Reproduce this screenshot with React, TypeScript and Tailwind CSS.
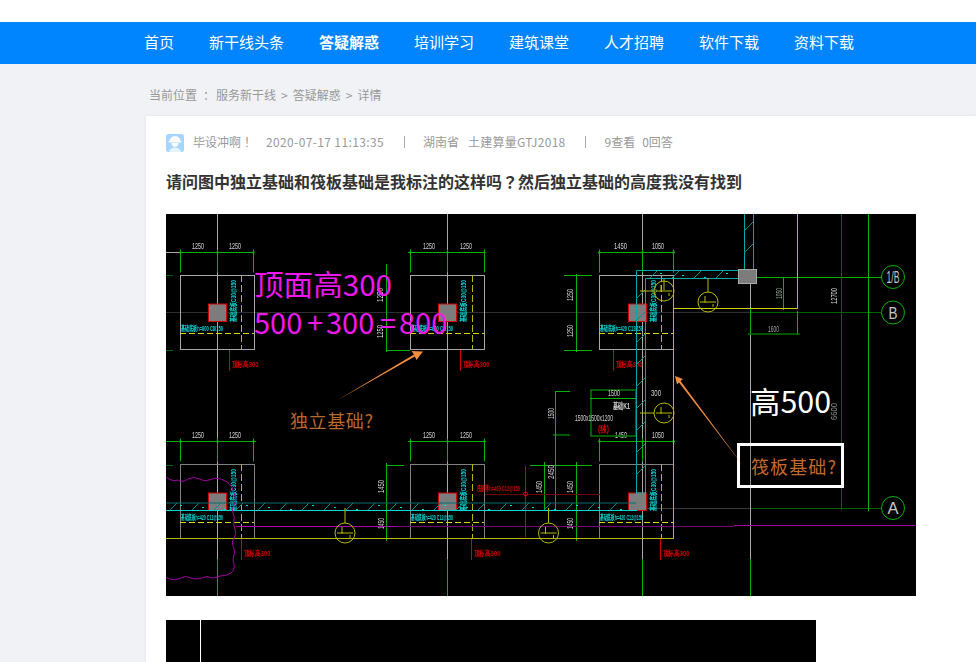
const GRAY = "#a8a8a8";
const GREEN = "#00b400";
const DGREEN = "#006400";
const CYAN = "#00d8d8";
const YEL = "#b8b800";
const RED = "#d00000";
const PUR = "#a000a0";
const CAD = "'Liberation Sans',sans-serif";
const CJK = "'Microsoft YaHei','Noto Sans CJK SC',sans-serif";

function T({ x, y, c = "#d4d4d4", s = 9, w, r, b, children }: { x: number; y: number; c?: string; s?: number; w?: number; r?: boolean; b?: boolean; children: string }) {
  return (
    <text
      x={x}
      y={y}
      fill={c}
      fontSize={s}
      fontWeight={b ? 700 : 400}
      fontFamily={CAD}
      textLength={w}
      lengthAdjust="spacingAndGlyphs"
      transform={r ? `rotate(-90 ${x} ${y})` : undefined}
      className="blur-[0.3px]"
    >
      {children}
    </text>
  );
}

function Dim({ y, x1, x2, ticks, h = 20 }: { y: number; x1: number; x2: number; ticks: number[]; h?: number }) {
  return (
    <g>
      <line x1={x1} x2={x2} y1={y} y2={y} stroke={GREEN} />
      {ticks.map((t) => (
        <g key={t}>
          <line x1={t} x2={t} y1={y - 3} y2={y + h} stroke={GREEN} />
          <rect x={t - 1} y={y - 1} width={2} height={2} fill={GREEN} />
        </g>
      ))}
    </g>
  );
}

function Footing({ x, w, y, cx, dash, lab, redLab, redX, cyanX, dashY, edge = GRAY }: { x: number; w: number; y: number; cx: number; dash: number; lab: string; redLab: string; redX: number; cyanX: number; dashY: number; edge?: string }) {
  return (
    <g>
      <rect x={x + 0.5} y={y + 0.5} width={w} height={74} fill="none" stroke={edge} />
      <line x1={x} x2={x + w} y1={dashY} y2={dashY} stroke="#d8d800" strokeDasharray="6 3" />
      <line x1={dash} x2={dash} y1={y} y2={y + 74} stroke={YEL} strokeDasharray="7 3" />
      <rect x={cx + 0.5} y={y + 29} width={18} height={17.5} fill="#7c7c7c" stroke={RED} />
      <T x={x + 1} y={dashY - 3} c={CYAN} s={8} w={cx - x + 14} b>{lab}</T>
      <T x={cyanX} y={y + 47} c={CYAN} s={8} w={42} r b>基础底板C30@150</T>
      <line x1={redX} x2={redX} y1={y + 75} y2={y + 96} stroke={RED} />
      <T x={redX + 2} y={y + 92} c={RED} s={8} w={27} b>{redLab}</T>
    </g>
  );
}

function Circ({ x, y, c = YEL, r = 10, t, tw }: { x: number; y: number; c?: string; r?: number; t?: string; tw?: number }) {
  return (
    <g>
      <circle cx={x} cy={y} r={r} fill="none" stroke={c} />
      {t ? (
        <text x={x} y={y + 6} textAnchor="middle" fill="#c8c8c8" fontSize={16} fontFamily={CAD} textLength={tw} lengthAdjust="spacingAndGlyphs">
          {t}
        </text>
      ) : (
        <g stroke={c}>
          <line x1={x - 8} x2={x + 8} y1={y} y2={y} />
          <line x1={x - 3} x2={x - 3} y1={y - 6} y2={y + 1} />
          <line x1={x + 5} x2={x + 5} y1={y + 2} y2={y + 5} />
        </g>
      )}
    </g>
  );
}

function Hatch({ x1, x2, y, h, step = 22 }: { x1: number; x2: number; y: number; h: number; step?: number }) {
  const n = Math.floor((x2 - x1) / step);
  return (
    <g stroke="#008c8c">
      {Array.from({ length: n }).map((_, i) => (
        <line key={i} x1={x1 + i * step} y1={y + h} x2={x1 + i * step + h} y2={y} />
      ))}
      {Array.from({ length: n }).map((_, i) => (
        <rect key={"d" + i} x={x1 + i * step + 10} y={y + 2 + (i % 3) * 2} width={2} height={1} fill={CYAN} stroke="none" />
      ))}
    </g>
  );
}

function VHatch({ x, y1, y2, w }: { x: number; y1: number; y2: number; w: number }) {
  const n = Math.floor((y2 - y1) / 22);
  return (
    <g stroke="#008c8c">
      {Array.from({ length: n }).map((_, i) => (
        <line key={i} x1={x} y1={y1 + i * 22 + w} x2={x + w} y2={y1 + i * 22} />
      ))}
    </g>
  );
}

function Drawing() {
  return (
    <svg viewBox="166 214 750 382" className="block w-[750px] h-[382px] bg-black">
      {/* long axes */}
      <g stroke="#303030">
        <line x1="166" x2="636" y1="312.5" y2="312.5" />
        <line x1="640" x2="750" y1="508.5" y2="508.5" stroke="#3a3a3a" />
        <line x1="640" x2="750" y1="312.5" y2="312.5" />
      </g>
      <line x1="757" x2="881" y1="277.5" y2="277.5" stroke={GREEN} />
      <line x1="750" x2="881" y1="312.5" y2="312.5" stroke={DGREEN} />
      <line x1="750" x2="881" y1="508.5" y2="508.5" stroke={DGREEN} />
      <line x1="841.5" x2="841.5" y1="214" y2="510" stroke={DGREEN} />
      <line x1="868.5" x2="868.5" y1="214" y2="511" stroke={GREEN} />
      {[217.5, 447.5, 642.5, 750.5].map((x) => (
        <g key={x}>
          <line x1={x} x2={x} y1={x === 750.5 ? 284 : 214} y2="559" stroke={GRAY} />
          <line x1={x} x2={x} y1="559" y2="596" stroke={GREEN} />
        </g>
      ))}
      {/* top dims */}
      <line x1="166" x2="180" y1="252.5" y2="252.5" stroke={GRAY} />
      <Dim y={252.5} x1={180} x2={254} ticks={[180.5, 217.5, 253.5]} />
      <Dim y={252.5} x1={408} x2={485} ticks={[410.5, 447.5, 484.5]} />
      <Dim y={252.5} x1={598} x2={675} ticks={[599.5, 642.5, 673.5]} />
      <T x={192} y={249} w={12}>1250</T>
      <T x={229} y={249} w={12}>1250</T>
      <T x={423} y={249} w={12}>1250</T>
      <T x={460} y={249} w={12}>1250</T>
      <T x={614} y={249} w={13}>1450</T>
      <T x={652} y={249} w={12}>1050</T>
      {/* lower dims */}
      <line x1="166" x2="180" y1="441.5" y2="441.5" stroke={GREEN} />
      <Dim y={441.5} x1={178} x2={256} ticks={[180.5, 217.5, 253.5]} />
      <Dim y={441.5} x1={408} x2={485} ticks={[410.5, 447.5, 484.5]} />
      <Dim y={441.5} x1={598} x2={675} ticks={[599.5, 642.5, 673.5]} />
      <T x={192} y={438} w={12}>1250</T>
      <T x={229} y={438} w={12}>1250</T>
      <T x={423} y={438} w={12}>1250</T>
      <T x={460} y={438} w={12}>1250</T>
      <T x={615} y={438} w={12}>1450</T>
      <T x={652} y={438} w={12}>1050</T>
      {/* vertical dims */}
      <g stroke={GREEN}>
        <line x1="386.5" x2="386.5" y1="264" y2="352" />
        <line x1="386" x2="410" y1="350.5" y2="350.5" />
        <line x1="386.5" x2="386.5" y1="463" y2="541" />
        <line x1="386" x2="404" y1="465.5" y2="465.5" />
        <line x1="576.5" x2="576.5" y1="274" y2="352" />
        <line x1="564" x2="592" y1="275.5" y2="275.5" />
        <line x1="564" x2="592" y1="350.5" y2="350.5" />
        <line x1="576.5" x2="576.5" y1="462" y2="541" />
        <line x1="530" x2="592" y1="465.5" y2="465.5" />
        <line x1="544.5" x2="544.5" y1="462" y2="510" />
        <line x1="555.5" x2="555.5" y1="392" y2="510" />
        <line x1="555" x2="570" y1="391.5" y2="391.5" />
        <line x1="553" x2="570" y1="435" y2="435" />
      </g>
      <rect x="591" y="390" width="45" height="46" fill="none" stroke="#007800" strokeWidth="1.5" />
      <line x1="590" x2="636" y1="398.5" y2="398.5" stroke={GREEN} />
      <T x={383} y={302} w={14} r>1250</T>
      <T x={383} y={338} w={13} r>1250</T>
      <T x={384} y={493} w={13} r>1450</T>
      <T x={384} y={529} w={11} r>1450</T>
      <T x={573} y={301} w={12} r>1250</T>
      <T x={573} y={337} w={12} r>1250</T>
      <T x={573} y={493} w={12} r>1450</T>
      <T x={573} y={529} w={11} r>1450</T>
      <T x={542} y={493} w={12} r>1450</T>
      <T x={554} y={479} w={14} r>2450</T>
      <T x={554} y={419} w={11} r>1500</T>
      <T x={608} y={396} w={12}>1500</T>
      <T x={651} y={396} w={10}>300</T>
      <T x={613} y={409} w={17} b>基础K1</T>
      <T x={575} y={421} w={38}>1500x1500x1200</T>
      <T x={598} y={432} c={RED} w={11} b>(独)</T>
      <T x={768} y={332} c="#a0a0a0" w={11}>1600</T>
      <T x={782} y={299} c="#a0a0a0" w={11} r>1050</T>
      <T x={837} y={304} w={16} r>12700</T>
      <T x={837} y={420} c="#8c8c8c" w={17} r>6600</T>
      <g stroke={GREEN}>
        <line x1="783.5" x2="783.5" y1="277" y2="310" />
        <line x1="750.5" x2="750.5" y1="309" y2="335" />
        <line x1="797.5" x2="797.5" y1="311" y2="335" />
      </g>
      <line x1="748" x2="800" y1="334" y2="334" stroke="#007000" strokeWidth="1.5" />
      <line x1="166" x2="173" y1="275.5" y2="275.5" stroke={DGREEN} />
      <line x1="166" x2="173" y1="350.5" y2="350.5" stroke={DGREEN} />
      <line x1="166" x2="173" y1="465.5" y2="465.5" stroke={DGREEN} />

      {/* footings */}
      <Footing x={180} w={74} y={275} cx={208} dash={241.5} dashY={333.5} cyanX={236} lab="基础底板h=600 C8/150" redLab="顶标高300" redX={229.5} />
      <Footing x={410} w={74} y={275} cx={438} dash={472.5} dashY={333.5} cyanX={466} lab="基础底板h=600 C8/150" redLab="顶标高300" redX={460.5} />
      <Footing x={599} w={74} y={275} cx={628} dash={661.5} dashY={333.5} cyanX={656} lab="基础底板h=420 C12/150" redLab="顶标高300" redX={613.5} />
      <Footing x={180} w={74} y={464} cx={208} dash={241.5} dashY={522.5} cyanX={236} edge="#808080" lab="基础底板h=420 C12@150" redLab="顶标高300" redX={241.5} />
      <Footing x={410} w={74} y={464} cx={438} dash={472.5} dashY={522.5} cyanX={466} edge="#808080" lab="基础底板h=420 C12@150" redLab="顶标高300" redX={471.5} />
      <Footing x={599} w={74} y={464} cx={628} dash={661.5} dashY={522.5} cyanX={656} edge="#808080" lab="基础底板h=420 C12@150" redLab="顶标高300" redX={660.5} />

      {/* red section mark */}
      <line x1="525.5" x2="525.5" y1="466" y2="537" stroke={RED} />
      <line x1="485" x2="600" y1="494.5" y2="494.5" stroke="#700000" />
      <circle cx="525.5" cy="494" r="2" fill="none" stroke={RED} />
      <T x={477} y={491} c={RED} s={8} w={43} b>筏板厚h=400 C12@150</T>

      {/* strip band */}
      <Hatch x1={170} x2={636} y={503} h={7} />
      <line x1="166" x2="636" y1="503" y2="503" stroke="#006e6e" />
      <line x1="166" x2="637" y1="510.5" y2="510.5" stroke={CYAN} />
      <line x1="397" x2="734" y1="526.5" y2="526.5" stroke="#7a007a" />
      <line x1="236" x2="397" y1="526.5" y2="526.5" stroke="#b000b0" />
      <line x1="734" x2="916" y1="525.5" y2="525.5" stroke="#a000a0" />
      <line x1="166" x2="673" y1="538.5" y2="538.5" stroke={YEL} />
      <line x1="673.5" x2="673.5" y1="278" y2="539" stroke={YEL} />
      <line x1="673" x2="798" y1="308.5" y2="308.5" stroke="#d0d000" />
      <line x1="797.5" x2="797.5" y1="214" y2="309" stroke={YEL} />

      {/* cyan walls */}
      <g fill="none" stroke="#00a8a8">
        <path d="M636.5 493V270.5H738M645.5 493V278.5H738" />
        <path d="M744.5 214V270M753.5 214V270" />
        <line x1="636" x2="646" y1="493" y2="493" stroke={CYAN} />
      </g>
      <Hatch x1={650} x2={738} y={271} h={7} />
      <VHatch x={636} y1={290} y2={500} w={9} />
      <VHatch x={744} y1={222} y2={270} w={9} />
      <rect x="738.5" y="269.5" width="18" height="14" fill="#7c7c7c" stroke="#a8a8a8" />

      {/* revision cloud */}
      <path
        d="M166 477q6 5 12 3q5 3 10-1q6-3 12 0q4 3 9 1q6-3 12-1q7 2 11 8q2 6 3 9q2 5-1 9q-3 4-1 8q2 4 1 8q-1 4 1 8q2 5-1 9q-3 4-1 8q3 5 1 9q-2 5 0 9q1 6-3 9q-5 3-11 3q-4 2-8 2q-5-3-10 0q-6 2-11 0q-6-3-10 0q-6 3-11 1q-5-3-10-1q-4 2-4 1"
        fill="none"
        stroke={PUR}
      />

      {/* section circles */}
      <line x1="664" x2="664" y1="279" y2="290" stroke={YEL} />
      <line x1="708" x2="708" y1="278" y2="292" stroke={YEL} />
      <line x1="345" x2="345" y1="508" y2="523" stroke={YEL} />
      <line x1="548.5" x2="548.5" y1="508" y2="523" stroke={YEL} />
      <line x1="640" x2="654" y1="291" y2="291" stroke={YEL} />
      <line x1="640" x2="654" y1="413" y2="413" stroke={YEL} />
      <Circ x={664} y={291} />
      <Circ x={708} y={302} />
      <Circ x={664} y={413} />
      <Circ x={345} y={533} />
      <Circ x={548.5} y={533} />
      <Circ x={893} y={277} c={GREEN} r={11.5} t="1/B" tw={13} />
      <Circ x={893} y={312.5} c={GREEN} r={11.5} t="B" tw={9} />
      <Circ x={893} y={508} c={GREEN} r={11.5} t="A" tw={11} />

      {/* annotations */}
      <text x="254" y="296" fill="#ee18ee" fontSize="29" fontFamily={CJK} textLength="138" lengthAdjust="spacingAndGlyphs">顶面高300</text>
      <text y="334" fill="#ee18ee" fontSize="29" fontFamily={CJK}>
        <tspan x="254">500</tspan>
        <tspan x="307">+</tspan>
        <tspan x="326">300</tspan>
        <tspan x="380">=</tspan>
        <tspan x="399">800</tspan>
      </text>
      <text x="750" y="413" fill="#fff" fontSize="30" fontFamily={CJK} textLength="81" lengthAdjust="spacingAndGlyphs">高500</text>
      <text x="290" y="428" fill="#b9682c" fontSize="18" fontFamily={CJK} textLength="83" lengthAdjust="spacing">独立基础?</text>
      <rect x="738.5" y="444.5" width="104" height="42" fill="#000" stroke="#fff" strokeWidth="3" />
      <line x1="750.5" x2="750.5" y1="446" y2="485" stroke="#8c8c8c" />
      <text x="751" y="474" fill="#c4692a" fontSize="18" fontFamily={CJK} textLength="85" lengthAdjust="spacing">筏板基础?</text>
      <polygon points="336,401 414,354.5 411.5,351 423,351.5 416.5,360 414.8,356.5" fill="#f08c3c" />
      <polygon points="744,467 679,382.5 677,384.5 675,376 683,379 680.5,381" fill="#f08c3c" />
    </svg>
  );
}

function Avatar() {
  return (
    <svg viewBox="0 0 18 18" className="w-[18px] h-[18px] shrink-0">
      <rect width="18" height="18" rx="2.5" fill="#a4d6ff" />
      <path d="M3.500 7.500a5.500 5.500 0 0 1 11 0z" fill="#fff" />
      <rect x="2.500" y="7" width="13" height="1.500" rx="0.7" fill="#fff" />
      <path d="M5.500 9h7c0 2.500-1.300 3.800-3.500 3.800S5.500 11.500 5.500 9z" fill="#fff" />
      <path d="M3 18c.4-3 2.800-4.500 6-4.500s5.600 1.500 6 4.500z" fill="#e4f3ff" />
    </svg>
  );
}

const NAV = ["首页", "新干线头条", "答疑解惑", "培训学习", "建筑课堂", "人才招聘", "软件下载", "资料下载"];

export default function App() {
  return (
    <div className="h-[662px] overflow-hidden bg-[#f0f2f5] font-['Microsoft_YaHei','Noto_Sans_CJK_SC',sans-serif]">
      <div className="h-[22px] bg-white" />
      <nav className="flex h-[42px] items-center gap-[35px] bg-[#0085ff] pb-[2px] pl-[144px] text-[15px] text-white">
        {NAV.map((n) => (
          <a key={n} className={n === "答疑解惑" ? "font-bold" : ""}>
            {n}
          </a>
        ))}
      </nav>
      <div className="flex h-[52px] items-center pl-[149px] pt-[10px] text-xs text-[#999]">
        <span>当前位置</span>
        <span className="ml-[6px] mr-[7px] w-[6px] text-center">：</span>
        <span>服务新干线</span>
        <span className="mx-[5px]">&gt;</span>
        <span>答疑解惑</span>
        <span className="mx-[5px]">&gt;</span>
        <span>详情</span>
      </div>
      <main className="ml-[146px] bg-white pl-5 pt-[18px] shadow-[0_0_3px_rgba(0,0,0,0.08)]">
        <div className="flex h-[18px] items-center text-xs text-[#999]">
          <Avatar />
          <div className="flex items-center pb-[2px]">
            <span className="ml-[9px] w-[73px]">
              毕设冲啊<span className="font-['Noto_Sans_CJK_TC']">！</span>
            </span>
            <span className="tracking-[0.37px]">2020-07-17 11:13:35</span>
            <span className="ml-5 h-3 w-px bg-[#a8a8a8]" />
            <span className="ml-[18px]">湖南省</span>
            <span className="ml-[9px] tracking-[0.27px]">土建算量GTJ2018</span>
            <span className="ml-[19px] h-3 w-px bg-[#a8a8a8]" />
            <span className="ml-[19px]">9查看</span>
            <span className="ml-[7px]">0回答</span>
          </div>
        </div>
        <h1 className="mt-[17px] h-6 text-base leading-6 font-bold text-[#333]">
          请问图中独立基础和筏板基础是我标注的这样吗<span className="font-['Noto_Sans_CJK_TC']">？</span>然后独立基础的高度我没有找到
        </h1>
        <div className="mt-[21px]">
          <Drawing />
        </div>
        <div className="relative mt-6 h-[60px] w-[650px] bg-black">
          <div className="absolute top-0 bottom-0 left-[34px] w-px bg-white" />
        </div>
      </main>
    </div>
  );
}
